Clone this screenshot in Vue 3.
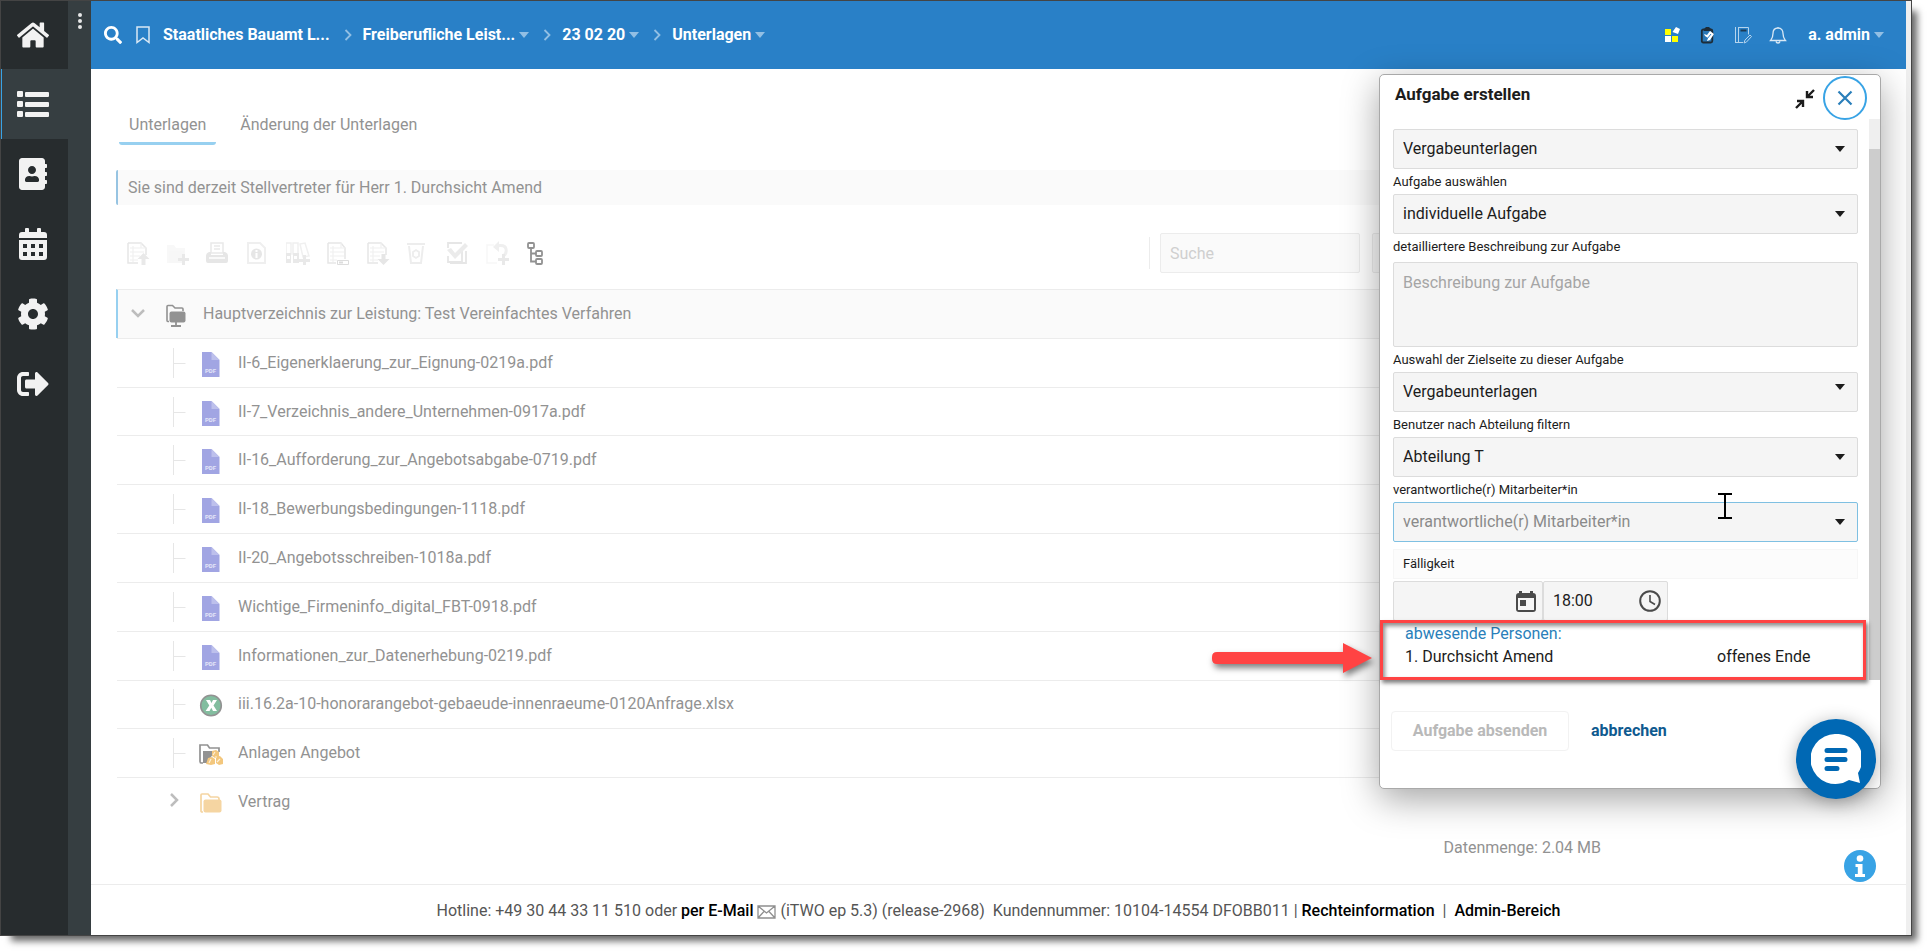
<script setup>
import { ref } from 'vue'

const navItems = [
  {
    label: 'Startseite',
    box: '0 0 576 512',
    path: 'M280.37 148.26L96 300.11V464a16 16 0 0 0 16 16l112.06-.29a16 16 0 0 0 15.92-16V368a16 16 0 0 1 16-16h64a16 16 0 0 1 16 16v95.64a16 16 0 0 0 16 16.05L464 480a16 16 0 0 0 16-16V300L295.67 148.26a12.19 12.19 0 0 0-15.3 0zM571.6 251.47L488 182.56V44.05a12 12 0 0 0-12-12h-56a12 12 0 0 0-12 12v72.61L318.47 43a48 48 0 0 0-61 0L4.34 251.47a12 12 0 0 0-1.6 16.9l25.5 31A12 12 0 0 0 45.15 301l235.22-193.74a12.19 12.19 0 0 1 15.3 0L530.9 301a12 12 0 0 0 16.9-1.6l25.5-31a12 12 0 0 0-1.7-16.93z'
  },
  {
    label: 'Liste',
    active: true,
    box: '0 0 32 32',
    path: 'M1 3h4q1 0 1 1v4q0 1-1 1H1q-1 0-1-1V4q0-1 1-1zM9 4h22q1 0 1 1v3q0 1-1 1H9q-1 0-1-1V5q0-1 1-1zM1 13h4q1 0 1 1v4q0 1-1 1H1q-1 0-1-1v-4q0-1 1-1zM9 14h22q1 0 1 1v3q0 1-1 1H9q-1 0-1-1v-3q0-1 1-1zM1 23h4q1 0 1 1v4q0 1-1 1H1q-1 0-1-1v-4q0-1 1-1zM9 24h22q1 0 1 1v3q0 1-1 1H9q-1 0-1-1v-3q0-1 1-1z'
  },
  {
    label: 'Adressbuch',
    box: '0 0 448 512',
    path: 'M436 160c6.6 0 12-5.4 12-12v-40c0-6.6-5.4-12-12-12h-20V48c0-26.5-21.5-48-48-48H48C21.5 0 0 21.5 0 48v416c0 26.5 21.5 48 48 48h320c26.5 0 48-21.5 48-48v-48h20c6.6 0 12-5.4 12-12v-40c0-6.6-5.4-12-12-12h-20v-64h20c6.6 0 12-5.4 12-12v-40c0-6.6-5.4-12-12-12h-20v-64h20zm-228-32c35.3 0 64 28.7 64 64s-28.7 64-64 64-64-28.7-64-64 28.7-64 64-64zm112 236.8c0 10.6-10 19.2-22.4 19.2H118.4C106 384 96 375.4 96 364.8v-19.2c0-31.8 30.1-57.6 67.2-57.6h5c12.3 5.1 25.7 8 39.8 8s27.6-2.9 39.8-8h5c37.1 0 67.2 25.8 67.2 57.6v19.2z'
  },
  {
    label: 'Kalender',
    box: '0 0 28 32',
    path: 'M6 1q0-1 1-1h2q1 0 1 1v3h8V1q0-1 1-1h2q1 0 1 1v3h3q3 0 3 3v3H0V7q0-3 3-3h3zM0 12h28v17q0 3-3 3H3q-3 0-3-3zM4 16v4h4v-4zM12 16v4h4v-4zM20 16v4h4v-4zM4 24v4h4v-4zM12 24v4h4v-4zM20 24v4h4v-4z'
  },
  {
    label: 'Einstellungen',
    box: '0 0 512 512',
    path: 'M487.4 315.7l-42.6-24.6c4.3-23.2 4.3-47 0-70.2l42.6-24.6c4.9-2.8 7.1-8.6 5.5-14-11.1-35.6-30-67.8-54.7-94.6-3.8-4.1-10-5.1-14.8-2.3L380.8 110c-17.9-15.4-38.5-27.3-60.8-35.1V25.8c0-5.6-3.9-10.5-9.4-11.7-36.7-8.2-74.3-7.8-109.2 0-5.5 1.2-9.4 6.1-9.4 11.7V75c-22.2 7.9-42.8 19.8-60.8 35.1L88.7 85.5c-4.9-2.8-11-1.9-14.8 2.3-24.7 26.7-43.6 58.9-54.7 94.6-1.7 5.4.6 11.2 5.5 14L67.3 221c-4.3 23.2-4.3 47 0 70.2l-42.6 24.6c-4.9 2.8-7.1 8.6-5.5 14 11.1 35.6 30 67.8 54.7 94.6 3.8 4.1 10 5.1 14.8 2.3l42.6-24.6c17.9 15.4 38.5 27.3 60.8 35.1v49.2c0 5.6 3.9 10.5 9.4 11.7 36.7 8.2 74.3 7.8 109.2 0 5.5-1.2 9.4-6.1 9.4-11.7v-49.2c22.2-7.9 42.8-19.8 60.8-35.1l42.6 24.6c4.9 2.8 11 1.9 14.8-2.3 24.7-26.7 43.6-58.9 54.7-94.6 1.5-5.5-.7-11.3-5.6-14.1zM256 336c-44.1 0-80-35.9-80-80s35.9-80 80-80 80 35.9 80 80-35.9 80-80 80z'
  },
  {
    label: 'Abmelden',
    box: '0 0 512 512',
    path: 'M497 273L329 441c-15 15-41 4.5-41-17v-96H152c-13.3 0-24-10.7-24-24v-96c0-13.3 10.7-24 24-24h136V88c0-21.4 25.9-32 41-17l168 168c9.3 9.4 9.3 24.6 0 34zM192 436v-40c0-6.6-5.4-12-12-12H96c-17.7 0-32-14.3-32-32V160c0-17.7 14.3-32 32-32h84c6.6 0 12-5.4 12-12V76c0-6.6-5.4-12-12-12H96c-53 0-96 43-96 96v192c0 53 43 96 96 96h84c6.6 0 12-5.4 12-12z'
  }
]

const crumbs = [
  { text: 'Staatliches Bauamt L...', menu: false },
  { text: 'Freiberufliche Leist...', menu: true },
  { text: '23 02 20', menu: true },
  { text: 'Unterlagen', menu: true }
]

const files = [
  { name: 'II-6_Eigenerklaerung_zur_Eignung-0219a.pdf', kind: 'pdf' },
  { name: 'II-7_Verzeichnis_andere_Unternehmen-0917a.pdf', kind: 'pdf' },
  { name: 'II-16_Aufforderung_zur_Angebotsabgabe-0719.pdf', kind: 'pdf' },
  { name: 'II-18_Bewerbungsbedingungen-1118.pdf', kind: 'pdf' },
  { name: 'II-20_Angebotsschreiben-1018a.pdf', kind: 'pdf' },
  { name: 'Wichtige_Firmeninfo_digital_FBT-0918.pdf', kind: 'pdf' },
  { name: 'Informationen_zur_Datenerhebung-0219.pdf', kind: 'pdf' },
  { name: 'iii.16.2a-10-honorarangebot-gebaeude-innenraeume-0120Anfrage.xlsx', kind: 'xlsx' },
  { name: 'Anlagen Angebot', kind: 'locked' },
  { name: 'Vertrag', kind: 'folder' }
]

const search = ref('')
const description = ref('')
const dueDate = ref('')
const dueTime = ref('18:00')
</script>

<template>
  <div class="page">
    <div class="frame">
      <nav class="sidebar" aria-label="Hauptnavigation">
        <a v-for="item in navItems" :key="item.label" href="#" class="nav-item" :class="{ active: item.active }" :aria-label="item.label">
          <svg class="nav-icon" :viewBox="item.box"><path fill-rule="evenodd" :d="item.path" /></svg>
        </a>
      </nav>
      <div class="rail">
        <button class="dots" aria-label="Menü"><i></i><i></i><i></i></button>
      </div>

      <div class="app">
        <header class="topbar">
          <button class="icon-btn search-btn" aria-label="Suchen">
            <svg width="18" height="18" viewBox="0 0 512 512"><path fill="#fff" d="M505 442.7L405.3 343c-4.5-4.5-10.6-7-17-7H372c27.6-35.3 44-79.7 44-128C416 93.1 322.9 0 208 0S0 93.1 0 208s93.1 208 208 208c48.3 0 92.7-16.4 128-44v16.3c0 6.4 2.5 12.5 7 17l99.7 99.7c9.4 9.4 24.6 9.4 33.9 0l28.3-28.3c9.4-9.4 9.4-24.6.1-34zM208 336c-70.7 0-128-57.2-128-128 0-70.7 57.2-128 128-128 70.7 0 128 57.2 128 128 0 70.7-57.2 128-128 128z" /></svg>
          </button>
          <button class="icon-btn mark-btn" aria-label="Lesezeichen">
            <svg width="14" height="18" viewBox="0 0 14 18"><path d="M1 1h12v15.500l-6-4.500-6 4.500z" fill="none" stroke="#d9e8f5" stroke-width="1.500" /></svg>
          </button>
          <nav class="crumbs" aria-label="Pfad">
            <template v-for="(c, i) in crumbs" :key="c.text">
              <svg v-if="i" class="sep" width="8" height="12" viewBox="0 0 8 12"><path d="M1.500 1l5 5-5 5" fill="none" stroke="#92bfe4" stroke-width="1.800" /></svg>
              <a href="#" class="crumb">{{ c.text }}<i v-if="c.menu" class="caret"></i></a>
            </template>
          </nav>
          <div class="tools">
            <button class="icon-btn" aria-label="Apps">
              <svg width="18" height="18" viewBox="0 0 18 18"><path fill="#ff0" d="M1 3h6v6H1zM8 10h6v6H8z" /><path fill="#fff" d="M1 10h6v6H1zM12 1l4 2-2 5-5.500-2z" /></svg>
            </button>
            <button class="icon-btn" aria-label="Aufgaben">
              <svg width="18" height="18" viewBox="0 0 18 18"><rect x="2.800" y="3.500" width="10.500" height="13" rx="1.500" fill="#2a76b4" stroke="#1d2c38" stroke-width="1.800" /><path fill="#1d2c38" d="M5 5V3l2-2h3l2 2v2zM12 5l3 3-2 2z" /><path fill="#fff" d="M5 8l3 1 3-4 4 3-4 6-3 1 1-3-3-2z" /><path d="M8 13l4-5" stroke="#2a80c8" /></svg>
            </button>
            <button class="icon-btn" aria-label="Notizen">
              <svg width="18" height="18" viewBox="0 0 18 18" fill="none" stroke="#b5d4ed"><path d="M1.500 1v16M4.500 1v16M4.500 1.500h10v7M1 16.500h8M10 17l1-3 5-5 1.500 1.500-5 5.500z" /><path d="M6.500 4.500h6" stroke="#1d3a54" stroke-width="2" /></svg>
            </button>
            <button class="icon-btn" aria-label="Benachrichtigungen">
              <svg width="18" height="18" viewBox="0 0 18 18" fill="none" stroke="#d9e8f5" stroke-width="1.300"><path d="M9 1v1M9 2C5.500 2 4 4.500 4 7.500c0 4-1 5-2.500 7h15c-1.500-2-2.500-3-2.500-7C14 4.500 12.500 2 9 2zM7 15.500c.5 2 3.500 2 4 0" /></svg>
            </button>
            <a href="#" class="crumb user">a. admin<i class="caret"></i></a>
          </div>
        </header>

        <main class="content">
          <div class="tabs">
            <a href="#" class="tab current">Unterlagen</a>
            <a href="#" class="tab">Änderung der Unterlagen</a>
          </div>

          <p class="notice">Sie sind derzeit Stellvertreter für Herr 1. Durchsicht Amend</p>

          <div class="toolbar">
            <button class="tool" aria-label="Hochladen">
              <svg viewBox="0 0 24 24"><path d="M2 2h13l5 5v7M2 2v20h10" fill="none" stroke="#e6e6e6" stroke-width="1.500" /><path d="M4 7h14M4 11h14M4 15h10M4 19h8M7 5v16M15 2v5h5" fill="none" stroke="#f0f0f0" stroke-width="1.200" /><path d="M17.500 12l6 6h-4v6h-4v-6h-4z" fill="#e9e9e9" /></svg>
            </button>
            <button class="tool" aria-label="Ordner anlegen">
              <svg viewBox="0 0 24 24"><path d="M1 4h7l2 3h9v7H4l-1 8H1z" fill="#f8f8f8" /><path d="M3 10h15v12H3z" fill="#f7f7f7" /><path d="M16 13h3v4h4v3h-4v4h-3v-4h-4v-3h4z" fill="#e9e9e9" /></svg>
            </button>
            <button class="tool" aria-label="Drucken">
              <svg viewBox="0 0 24 24"><path d="M5 2h12v10H5z" fill="none" stroke="#e9e9e9" stroke-width="1.500" /><path d="M8 5h6M8 8h6" stroke="#e9e9e9" stroke-width="1.500" /><path d="M3 11h2v3h12v-3h2q3 1 3 4v5q0 2-2 2H2q-2 0-2-2v-5q0-3 3-4z" fill="#e6e6e6" /><path d="M3 17h16" stroke="#fff" stroke-width="1.500" /></svg>
            </button>
            <button class="tool" aria-label="Information">
              <svg viewBox="0 0 24 24"><path d="M2 2h12l5 5v15H2z" fill="none" stroke="#efefef" stroke-width="2" /><circle cx="10.500" cy="13" r="5.500" fill="#e6e6e6" /><path d="M10.500 9v2M10.500 12v5" stroke="#fff" stroke-width="2" /></svg>
            </button>
            <button class="tool" aria-label="Ordnerablage">
              <svg viewBox="0 0 24 24"><path d="M0 2h5v11H0zM7 2h5v11H7zM14 3l5-1 4 13-6 1z" fill="none" stroke="#f0f0f0" stroke-width="1.500" /><path d="M0 12h5v10H0zM7 12h6v10H7z" fill="#e9e9e9" /><path d="M1 15h3v3H1zM8 15h3v3H8z" fill="#fff" /><path d="M17 14h3v4h4v3h-4v3h-3v-3h-4v-3h4z" fill="#e9e9e9" /></svg>
            </button>
            <button class="tool" aria-label="Umbenennen">
              <svg viewBox="0 0 24 24"><path d="M2 2h13l4 5v11M2 2v20h8" fill="none" stroke="#e6e6e6" stroke-width="1.500" /><path d="M4 7h14M4 11h14M4 15h14M4 19h7M7 5v16M15 2v5h4" fill="none" stroke="#f0f0f0" stroke-width="1.200" /><path d="M11.500 19.500h11v4h-11z" fill="#fff" stroke="#ddd" /><path d="M13 21.500h4" stroke="#ddd" stroke-width="2" /></svg>
            </button>
            <button class="tool" aria-label="Herunterladen">
              <svg viewBox="0 0 24 24"><path d="M2 2h13l5 5v7M2 2v20h10" fill="none" stroke="#e6e6e6" stroke-width="1.500" /><path d="M4 7h14M4 11h14M4 15h10M4 19h8M7 5v16M15 2v5h5" fill="none" stroke="#f0f0f0" stroke-width="1.200" /><path d="M17.500 24l6-6h-4v-5h-4v5h-4z" fill="#e6e6e6" /></svg>
            </button>
            <button class="tool" aria-label="Löschen">
              <svg viewBox="0 0 24 24"><path d="M1 3h18M3 5l2 17h10l2-17" fill="none" stroke="#ededed" stroke-width="2" /><path d="M7 11l3-2 3 2v4l-3 2-3-2z" fill="none" stroke="#ededed" stroke-width="1.800" /></svg>
            </button>
            <button class="tool" aria-label="Prüfen">
              <svg viewBox="0 0 24 24"><path d="M2 7V2h14M2 15v6h14V10M20 10v12H4" fill="none" stroke="#e6e6e6" stroke-width="1.800" /><path d="M1 9l4-2 4 5L19 2l3 3L9 18z" fill="#ebebeb" /></svg>
            </button>
            <button class="tool" aria-label="Wiederherstellen">
              <svg viewBox="0 0 24 24"><path d="M8 4H1v18h10" fill="none" stroke="#f7f7f7" stroke-width="1.500" /><path d="M10 5q9-2 10 3 1 5-3 7" fill="none" stroke="#efefef" stroke-width="3" /><path d="M13 0v11L7 6z" fill="#efefef" /><path d="M16 13h3v4h4v3h-4v4h-3v-4h-4v-3h4z" fill="#e9e9e9" /></svg>
            </button>
            <button class="tool" aria-label="Baumansicht">
              <svg viewBox="0 0 24 24" fill="none" stroke="#929292" stroke-width="1.800"><rect x="2" y="2" width="6" height="5" rx="1" /><rect x="10" y="10" width="6" height="5" rx="1" /><rect x="10" y="18" width="6" height="5" rx="1" /><path d="M5 7v13.500h5M5 12.500h5" /></svg>
            </button>
            <span class="divider"></span>
            <input v-model="search" class="search" type="text" placeholder="Suche" aria-label="Suche" />
            <select class="filter" aria-label="Filter"><option></option></select>
          </div>

          <div class="tree">
            <div class="row root">
              <svg class="toggle" width="16" height="16" viewBox="0 0 16 16"><path d="M2 4l6 6 6-6" fill="none" stroke="#bdbdbd" stroke-width="2.500" /></svg>
              <svg class="root-icon" width="20" height="24" viewBox="0 0 20 24"><path d="M3 17.500H1.800q-.8 0-.8-1V2.500Q1 1.500 2 1.500h4.500L9 4h7q1 0 1 1v2" fill="none" stroke="#929292" stroke-width="1.600" /><rect x="3.500" y="7.500" width="16" height="11" rx="2" fill="#929292" /><path d="M10 18v4M5 22h10" stroke="#929292" stroke-width="1.800" /></svg>
              <span>Hauptverzeichnis zur Leistung: Test Vereinfachtes Verfahren</span>
            </div>
            <div v-for="f in files" :key="f.name" class="row child">
              <svg v-if="f.kind === 'folder'" class="branch" width="16" height="30" viewBox="0 0 16 30"><path d="M1 7l6 6-6 6" fill="none" stroke="#bdbdbd" stroke-width="2.500" /></svg>
              <svg v-else class="branch" width="16" height="30" viewBox="0 0 16 30"><path d="M3.500 0v30M3.500 15.500h12" stroke="#e6e6e6" stroke-width="1" /></svg>
              <svg v-if="f.kind === 'pdf'" class="file-icon" width="24" height="26" viewBox="0 0 24 26">
                <path d="M3 1h9.500l8 8v17H3z" fill="#a1a5e3" /><path d="M12.500 1v8h8z" fill="#bdc0ec" />
                <text x="11.500" y="22" text-anchor="middle" font-size="6" font-weight="700" fill="#e4e5f8">PDF</text>
              </svg>
              <svg v-else-if="f.kind === 'xlsx'" class="file-icon" width="24" height="26" viewBox="0 0 24 26">
                <circle cx="12" cy="13.500" r="10.300" fill="#83bd9f" stroke="#929292" stroke-width="1.600" /><path d="M7 8h4l1.500 3L14 8h4l-3.500 5.500L18 19h-4l-1.700-3.200L10.500 19H6.600l3.700-5.500z" fill="#fff" />
              </svg>
              <svg v-else-if="f.kind === 'locked'" class="file-icon" width="24" height="26" viewBox="0 0 24 26">
                <path d="M4 22H2.500Q1 22 1 20.500V4h7.500l2 3H20v4" fill="none" stroke="#929292" stroke-width="1.700" /><path d="M4 10h10v3L8 22H4z" fill="#929292" /><g fill="#f3c77d"><path d="M13 10l4-1 3 2v5l-4 1-3-2zM9 17l4-1 3 2v5l-4 1-5-1zM17 16l4-1 3 3v5l-4 1-3-2z" /></g><path d="M14 14l2-3M10 22l2-4M18 21l3-3M16 16h2" stroke="#fdf1dc" stroke-width="1.200" />
              </svg>
              <svg v-else class="file-icon" width="24" height="26" viewBox="0 0 24 26">
                <path d="M4 22H3q-1 0-1-1V5q0-1 1-1h6l2.500 3H18q2 0 2 2v2" fill="none" stroke="#f5d5a2" stroke-width="1.700" /><rect x="4.500" y="9.500" width="18" height="13" rx="2" fill="#f5d5a2" />
              </svg>
              <span>{{ f.name }}</span>
            </div>
          </div>

          <p class="amount">Datenmenge: 2.04 MB</p>
        </main>

        <footer class="footer">
          <span>Hotline: +49 30 44 33 11 510 oder <a href="#">per E-Mail</a>
            <svg class="mail" width="19" height="14" viewBox="0 0 19 14"><path d="M1 1h17v12H1zM1 1l8.500 7L18 1M1 13l6-6.500M18 13l-6-6.500" fill="none" stroke="#8f8f8f" stroke-width="1.300" /></svg>
            (iTWO ep 5.3) (release-2968) &nbsp;Kundennummer: 10104-14554 DFOBB011 | <a href="#">Rechteinformation</a> &nbsp;|&nbsp; <a href="#">Admin-Bereich</a></span>
        </footer>
      </div>
      <div class="gutter"></div>

      <section class="dialog" role="dialog" aria-labelledby="dlg-title">
        <header class="dlg-head">
          <h2 id="dlg-title">Aufgabe erstellen</h2>
          <button class="shrink" aria-label="Verkleinern">
            <svg width="20" height="20" viewBox="0 0 20 20"><path d="M19 1l-6 6M12 2v6h6M1 19l6-6M2 12h6v6" fill="none" stroke="#1c1c1c" stroke-width="2.400" /></svg>
          </button>
          <button class="close" aria-label="Schließen">
            <svg width="16" height="16" viewBox="0 0 16 16"><path d="M1.500 1.500l13 13M14.500 1.500l-13 13" stroke="#2a7fba" stroke-width="2.200" /></svg>
          </button>
        </header>

        <div class="dlg-body">
          <form class="form" @submit.prevent>
            <div class="pick">
              <select aria-label="Bereich"><option>Vergabeunterlagen</option></select>
            </div>
            <label for="task">Aufgabe auswählen</label>
            <div class="pick">
              <select id="task"><option>individuelle Aufgabe</option></select>
            </div>
            <label for="desc" class="tall">detailliertere Beschreibung zur Aufgabe</label>
            <textarea id="desc" v-model="description" placeholder="Beschreibung zur Aufgabe"></textarea>
            <label for="target">Auswahl der Zielseite zu dieser Aufgabe</label>
            <div class="pick raised">
              <select id="target"><option>Vergabeunterlagen</option></select>
            </div>
            <label for="dept">Benutzer nach Abteilung filtern</label>
            <div class="pick">
              <select id="dept"><option>Abteilung T</option></select>
            </div>
            <label for="person">verantwortliche(r) Mitarbeiter*in</label>
            <div class="pick focus">
              <select id="person"><option>verantwortliche(r) Mitarbeiter*in</option></select>
            </div>
            <div class="due-title">Fälligkeit</div>
            <div class="due">
              <div class="due-field date">
                <input v-model="dueDate" type="text" aria-label="Datum" />
                <svg width="20" height="22" viewBox="0 0 20 22"><path d="M3 1h3v2h8V1h3v2q3 0 3 3v13q0 3-3 3H3q-3 0-3-3V6q0-3 3-3zM2 8v12h16V8z" fill="#4a4a4a" fill-rule="evenodd" /><path d="M4 10h6v6H4z" fill="#4a4a4a" /></svg>
              </div>
              <div class="due-field time">
                <input v-model="dueTime" type="text" aria-label="Uhrzeit" />
                <svg width="22" height="22" viewBox="0 0 22 22"><circle cx="11" cy="11" r="9.800" fill="none" stroke="#4a4a4a" stroke-width="2" /><path d="M11 5v6.500l5 3" fill="none" stroke="#4a4a4a" stroke-width="1.600" /></svg>
              </div>
            </div>
            <div class="absent">
              <p class="absent-title">abwesende Personen:</p>
              <p class="absent-row"><span>1. Durchsicht Amend</span><span>offenes Ende</span></p>
            </div>
          </form>
          <div class="scroll"></div>
        </div>

        <div class="dlg-foot">
          <button class="send" disabled>Aufgabe absenden</button>
          <button class="cancel">abbrechen</button>
        </div>
        <div class="highlight"></div>
        <svg class="cursor" width="14" height="26" viewBox="0 0 14 26"><path d="M0 1h14M0 25h14M7 1v24" stroke="#000" stroke-width="2" /></svg>
        <svg class="arrow" width="160" height="30" viewBox="0 0 160 30"><path d="M5 9h126V0l29 15-29 15v-9H5q-5 0-5-5v-2q0-5 5-5z" fill="#ff4343" /></svg>
      </section>

      <button class="chat" aria-label="Chat">
        <svg width="50" height="52" viewBox="0 0 50 52"><path d="M25 0a25 25 0 1 0 13 46l11 3-2-10A25 25 0 0 0 25 0z" fill="#fff" /><path d="M16 16.500h18M16 25.500h18M16 34.500h10" stroke="#0068b4" stroke-width="5" stroke-linecap="round" /></svg>
      </button>
      <button class="info" aria-label="Information">
        <svg width="32" height="32" viewBox="0 0 32 32"><circle cx="16" cy="16" r="16" fill="#38a3e5" /><circle cx="16" cy="8.500" r="3.300" fill="#fff" /><path d="M11.500 14h7v10h2.500v3h-10v-3h2.800v-7h-2.300z" fill="#fff" /></svg>
      </button>
    </div>
  </div>
</template>

<style>
body {
  background: #fff;
}
</style>

<style scoped>
.page {
  box-sizing: border-box;
  min-height: 100vh;
  padding: 0 15px 15px 0;
  display: flex;
  font: 16px/20px Roboto, "Liberation Sans", sans-serif;
  color: #1c1c1c;
}
.page *, .page *::before, .page *::after { box-sizing: border-box; }
.page button, .page input, .page select, .page textarea { font: inherit; color: inherit; margin: 0; }
.page button { background: none; border: 0; padding: 0; cursor: pointer; }
.page a { text-decoration: none; color: inherit; }
.page p, .page h2 { margin: 0; }
.page svg { display: block; flex: none; }
.frame {
  position: relative;
  flex: 1;
  display: flex;
  border: 1px solid #444;
  box-shadow: 8px 8px 7px -3px rgba(0, 0, 0, 0.6);
  background: #fff;
}
.sidebar { width: 67px; background: #272c2e; }
.nav-item {
  display: flex;
  align-items: center;
  justify-content: center;
  height: 70px;
  padding-right: 3px;
}
.nav-item:first-child { height: 68px; }
.nav-item.active { background: #363e41; border-left: 1px solid #38a3e5; padding-right: 4px; }
.nav-icon { width: 32px; height: 32px; fill: #f2f2f2; }
.rail { width: 23px; background: #363e41; }
.dots { display: flex; flex-direction: column; gap: 2px; width: 23px; padding: 12px 0 0 10px !important; }
.dots i { width: 4px; height: 4px; border-radius: 50%; background: #e8e8e8; }
.app { flex: 1; min-width: 0; display: flex; flex-direction: column; }
.gutter { width: 5px; background: #efefef; }

.topbar {
  display: flex;
  align-items: center;
  height: 68px;
  padding: 0 22px 0 13px;
  background: #2980c7;
  color: #fff;
}
.mark-btn { padding-left: 14px !important; }
.crumbs { display: flex; align-items: center; margin-left: 13px; }
.crumb { display: flex; align-items: center; font-weight: 700; white-space: nowrap; }
.sep { margin: 0 11px 0 14px; }
.caret {
  margin-left: 4px;
  border: 5px solid transparent;
  border-top: 6px solid #92bfe4;
  border-bottom: 0;
}
.tools { display: flex; align-items: center; gap: 17px; margin-left: auto; }
.user { margin-left: 4px; }

.content { flex: 1; padding: 34px 26px 0 25px; color: #929292; }
.tabs { display: flex; gap: 14px; padding-left: 3px; }
.tab { padding: 12px 10px 7px; border-bottom: 3px solid transparent; }
.tab.current { border-bottom-color: #97d0f0; border-radius: 3px; }
.notice {
  margin-top: 25px !important;
  padding: 8px 10px 7px;
  border-left: 2px solid #97c4e2;
  border-radius: 2px;
  background: #fafafa;
}
.toolbar { display: flex; align-items: center; gap: 16px; margin-top: 28px; padding-left: 10px; }
.tool, .tool svg { width: 24px; height: 24px; }
.divider { width: 1px; height: 32px; margin-left: auto; background: #ececec; }
.search, .filter {
  height: 40px;
  border: 1px solid #ececec;
  border-radius: 2px;
  background: #fafafa;
  padding: 0 9px;
  appearance: none;
}
.search { width: 200px; margin-left: -6px !important; }
.filter { width: 508px; margin-left: -4px !important; }
.search::placeholder { color: #cfcfcf; opacity: 1; }

.tree { display: grid; grid-auto-rows: 1fr; min-height: 537px; margin-top: 16px; }
.row { display: flex; align-items: center; border-top: 1px solid #ececec; }
.root { border-left: 2px solid #97d0f0; background: #fafafa; padding-left: 12px; }
.root-icon { margin: 4px 17px 0 20px; }
.child { margin-left: 1px; padding-left: 53px; }
.file-icon { margin: 2px 15px 0 13px; }
.amount { width: 1485px; max-width: 100%; padding-top: 12px; text-align: right; }

.footer {
  display: flex;
  align-items: center;
  justify-content: center;
  height: 51px;
  padding-top: 2px;
  border-top: 1px solid #ececec;
  color: #555;
  white-space: nowrap;
}
.footer a { font-weight: 500; color: #000; }
.page .mail { display: inline-block; vertical-align: -3px; margin-left: 4px; }

.dialog {
  position: absolute;
  top: 73px;
  right: 30px;
  width: 502px;
  padding-bottom: 37px;
  border: 1px solid #a9a9a9;
  border-radius: 5px;
  background: #fff;
  box-shadow: 0 10px 36px rgba(0, 0, 0, 0.36);
}
.dlg-head { display: flex; align-items: flex-start; height: 44px; padding: 1px 13px 0 15px; }
.dlg-head h2 { flex: 1; padding-top: 8px; font-size: 17px; font-weight: 700; }
.shrink { padding: 13px 8px 0 0 !important; }
.close {
  display: flex;
  align-items: center;
  justify-content: center;
  width: 44px;
  height: 44px;
  border: 2px solid #38a3e5 !important;
  border-radius: 50%;
}
.dlg-body { display: flex; justify-content: space-between; }
.form { width: 478px; padding: 10px 0 0 13px; }
.form label { display: block; height: 25px; padding-top: 3px; font-size: 13px; }
.form label.tall { height: 28px; }
.pick { position: relative; }
.pick::after {
  content: "";
  position: absolute;
  top: 17px;
  right: 13px;
  border: 5px solid transparent;
  border-top: 6px solid #1c1c1c;
  border-bottom: 0;
}
.pick.raised::after { top: 12px; }
.pick select, .form textarea, .due-field {
  display: block;
  width: 100%;
  height: 40px;
  border: 1px solid #dcdcdc;
  border-radius: 2px;
  background: #f5f5f5;
  padding: 0 9px;
  appearance: none;
}
.pick.focus select { border-color: #7fc0e2; color: #8a8a8a; }
.form textarea { height: 85px; padding: 10px 9px; resize: none; }
.form textarea::placeholder { color: #a5a5a5; opacity: 1; }
.due-title {
  margin-top: 7px;
  height: 30px;
  padding: 4px 9px;
  border: 1px solid #f6f6f6;
  background: #fcfcfc;
  font-size: 13px;
}
.due { display: flex; margin-top: 2px; }
.due-field { display: flex; align-items: center; justify-content: space-between; padding: 0 6px 0 9px; }
.due-field.date { width: 150px; }
.due-field.time { width: 125px; }
.due-field input { width: 70px; padding: 0; border: 0; background: none; }
.absent { padding: 1px 0 16px 12px; line-height: 23px; }
.absent-title { color: #2a7fba; }
.absent-row { display: flex; }
.absent-row span:first-child { width: 312px; }
.scroll { width: 11px; background: #cdcdcd; border-top: 30px solid #efefef; margin-bottom: 4px; }
.dlg-foot { display: flex; align-items: center; gap: 22px; margin-top: 27px; padding-left: 11px; }
.page .send {
  height: 40px;
  width: 178px;
  border: 1px solid #f2f2f2;
  border-radius: 4px;
  font-weight: 700;
  color: #b9b9b9;
}
.page .cancel { font-weight: 700; color: #0f5a8f; }
.highlight {
  position: absolute;
  left: 0;
  top: 545px;
  width: 486px;
  height: 60px;
  border: 3px solid #ff4343;
  box-shadow: 2px 3px 4px rgba(0, 0, 0, 0.5), inset 2px 3px 4px rgba(0, 0, 0, 0.45);
}
.page .cursor { position: absolute; left: 338px; top: 418px; }
.page .arrow { position: absolute; left: -168px; top: 568px; filter: drop-shadow(2px 4px 3px rgba(0, 0, 0, 0.5)); }
.page .chat {
  position: absolute;
  right: 35px;
  top: 718px;
  width: 80px;
  height: 80px;
  padding: 2px 0 0 15px;
  border-radius: 50%;
  background: #0068b4;
  box-shadow: 0 3px 18px rgba(0, 0, 0, 0.3);
}
.info { position: absolute; right: 35px; bottom: 53px; }
</style>
